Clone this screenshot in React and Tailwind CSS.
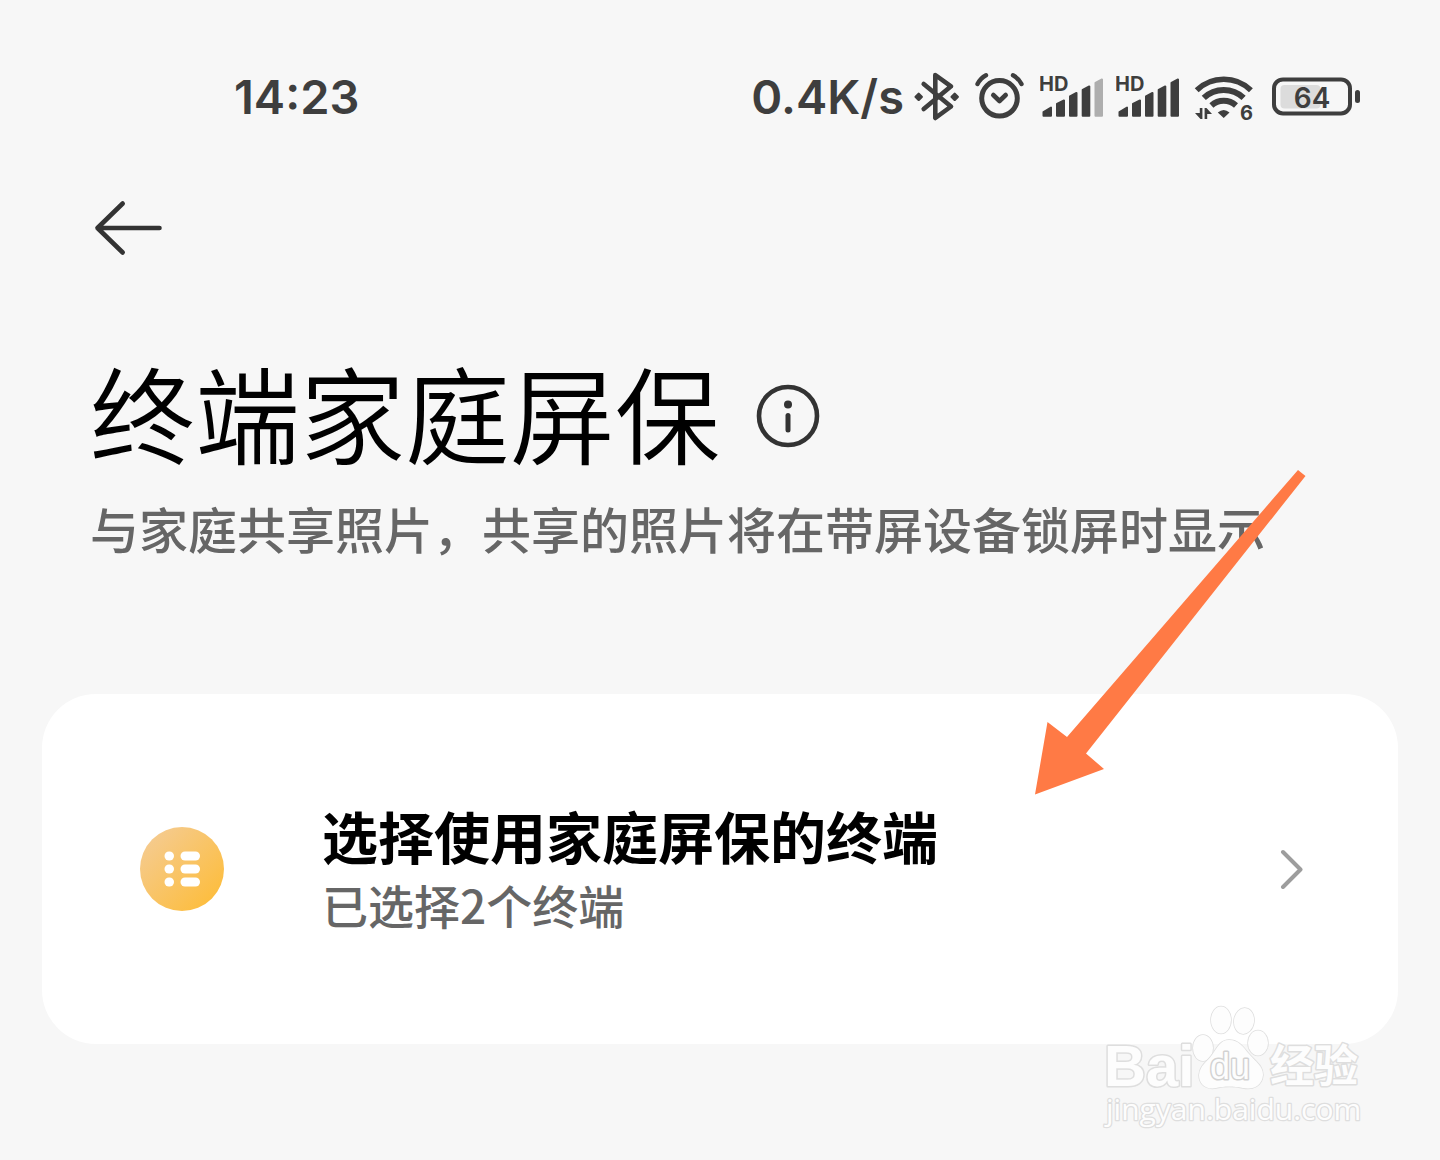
import { useId } from "react";

const StatusText = ({ children }) => (
  <span className="font-['Inter',sans-serif] text-[47px] leading-[58px] font-semibold whitespace-nowrap">{children}</span>
);

const BluetoothIcon = () => (
  <svg width="45" height="50" viewBox="0 0 45 50" className="shrink-0" aria-hidden="true">
    <path
      d="M9.7 12 L37 34.5 L21.3 46 V3 L37 14.3 L9.7 37"
      fill="none"
      stroke="currentColor"
      strokeWidth="4.6"
      strokeLinecap="round"
      strokeLinejoin="round"
    />
    <path
      d="M4.7 21.8 L7.7 24.8 L4.7 27.8 L1.7 24.8 Z M40.7 21.8 L43.7 24.8 L40.7 27.8 L37.7 24.8 Z"
      fill="currentColor"
      stroke="currentColor"
      strokeWidth="2.4"
      strokeLinejoin="round"
    />
  </svg>
);

const AlarmIcon = () => (
  <svg width="49" height="50" viewBox="0 0 49 50" className="shrink-0" fill="none" stroke="currentColor" strokeLinecap="round" strokeLinejoin="round" aria-hidden="true">
    <circle cx="24.5" cy="26.3" r="17.8" strokeWidth="5" />
    <path d="M18.3 23 L24.5 29 L30.7 23" strokeWidth="4.6" />
    <path d="M2.5 12 Q5.5 6 11 3.2 M38 3.2 Q43.5 6 46.5 12" strokeWidth="4.4" />
  </svg>
);

const SignalIcon = ({ weak }) => (
  <svg width="63" height="50" viewBox="0 0 63 50" className="shrink-0" fill="currentColor" aria-hidden="true">
    <text x="-1" y="19" fontSize="20" fontWeight="700" fontFamily="Inter, sans-serif">HD</text>
    <g stroke="currentColor" strokeWidth="2" strokeLinejoin="round">
      <path d="M3.5 40 L11 35.5 V43.7 H3.5 Z" />
      <path d="M17 32 L24 28.5 V43.7 H17 Z" />
      <path d="M30 24.5 L36.5 21 V43.7 H30 Z" />
      <path d="M42.7 18 L49.3 14.5 V43.7 H42.7 Z" />
    </g>
    <path
      d="M55.5 11 L62 7.5 V43.7 H55.5 Z"
      className={weak ? "fill-[#aeaeae] stroke-[#aeaeae]" : "fill-[#3e3e3e] stroke-[#3e3e3e]"}
      strokeWidth="2"
      strokeLinejoin="round"
    />
  </svg>
);

const WifiIcon = () => (
  <svg width="61" height="50" viewBox="0 0 61 50" className="shrink-0 overflow-visible" fill="none" stroke="currentColor" aria-hidden="true">
    <path d="M1.7 18.2 A39 39 0 0 1 55.9 18.2" strokeWidth="5.6" />
    <path d="M8.8 25.9 A29 29 0 0 1 48.6 25.9" strokeWidth="6" />
    <path d="M16.4 33.5 A18.5 18.5 0 0 1 41 33.5" strokeWidth="6" />
    <path d="M22.8 40.5 Q28.7 35.5 34.5 40.5 L28.7 46 Z" fill="currentColor" stroke="none" />
    <path d="M4.8 36 H7.4 V47 H5.5 L0 41 H4.8 Z M9.6 47 V36 H11.5 L17 42 H12.2 V47 Z" fill="currentColor" stroke="none" />
    <text x="45" y="48" fontSize="20" fontWeight="700" fontFamily="Inter, sans-serif" fill="currentColor" stroke="none">6</text>
  </svg>
);

const BatteryIcon = () => (
  <svg width="88" height="50" viewBox="0 0 88 50" className="shrink-0" aria-hidden="true">
    <rect x="2" y="7.4" width="76" height="34" rx="9" fill="none" stroke="currentColor" strokeWidth="4" />
    <rect x="8.5" y="13" width="40" height="23.5" rx="4" fill="#dcdcdc" />
    <rect x="83" y="18" width="5" height="13" rx="2.5" fill="currentColor" />
    <text x="40" y="36" textAnchor="middle" fontSize="28" fontWeight="600" fontFamily="Inter, sans-serif" fill="currentColor">64</text>
  </svg>
);

const StatusBar = () => (
  <div className="flex items-center justify-between pr-20 pl-[234px] text-[#3e3e3e]">
    <StatusText>14:23</StatusText>
    <div className="flex items-center gap-4">
      <div className="flex items-center gap-2.5">
        <StatusText>0.4K/s</StatusText>
        <BluetoothIcon />
      </div>
      <AlarmIcon />
      <div className="flex items-center gap-[13px]">
        <SignalIcon weak />
        <SignalIcon />
      </div>
      <WifiIcon />
      <BatteryIcon />
    </div>
  </div>
);

const ListIcon = () => {
  const id = useId();
  return (
    <svg width="84" height="84" viewBox="0 0 84 84" className="shrink-0" aria-hidden="true">
      <defs>
        <linearGradient id={id} x1="0.1" y1="0.1" x2="0.9" y2="0.9">
          <stop offset="0" stopColor="#f5cb90" />
          <stop offset="1" stopColor="#fdbd3c" />
        </linearGradient>
      </defs>
      <circle cx="42" cy="42" r="42" fill={`url(#${id})`} />
      {[24.5, 37.5, 50.5].map((y) => (
        <g key={y} fill="#fff">
          <rect x="24.5" y={y} width="9.5" height="9" rx="4.5" />
          <rect x="40.5" y={y} width="19.5" height="9" rx="4.5" />
        </g>
      ))}
    </svg>
  );
};

const PointerArrow = () => (
  <svg width="271" height="325" viewBox="0 0 271 325" className="pointer-events-none absolute -top-56 right-[92px]" aria-hidden="true">
    <path d="M263 0 L270.5 6 L51 283.5 L69 299 L0 324.5 L12.5 252 L32 267 Z" fill="#ff7a45" />
  </svg>
);

const Watermark = () => (
  <svg
    width="264"
    height="128"
    viewBox="0 0 264 128"
    className="pointer-events-none absolute top-[308px] right-8"
    fill="#fdfdfd"
    stroke="#dedede"
    strokeWidth="1.5"
    strokeLinejoin="round"
    paintOrder="stroke"
    aria-hidden="true"
  >
    <text x="2" y="84" fontSize="58" fontWeight="700" fontFamily="Liberation Sans, sans-serif" strokeWidth="3">Bai</text>
    <ellipse cx="101" cy="46" rx="10" ry="13" />
    <ellipse cx="119" cy="18" rx="10" ry="13.5" />
    <ellipse cx="142" cy="19" rx="10" ry="13" transform="rotate(8 142 19)" />
    <ellipse cx="156" cy="41" rx="10" ry="12.5" />
    <path d="M127 38 C137 38 141 45 147 52 C154 60 161 64 161 73 C160 84 151 88 141 86 C131 84 123 84 114 86 C104 88 97 82 97 73 C98 63 105 60 110 53 C115 46 118 38 127 38 Z" />
    <text x="108" y="77" fontSize="36" fontFamily="Liberation Sans, sans-serif" strokeWidth="3" stroke="#d2d2d2">du</text>
    <text x="168" y="80" fontSize="44" fontWeight="700" fontFamily="Noto Sans CJK SC, sans-serif" strokeWidth="3">经验</text>
    <text x="4" y="118" fontSize="30" fontFamily="Open Sans, sans-serif" strokeWidth="2.5">jingyan.baidu.com</text>
  </svg>
);

const App = () => {
  return (
    <main className="min-h-screen bg-[#f7f7f7] pt-[68px] font-['Noto_Sans_CJK_SC',sans-serif]" lang="zh-CN">
      <StatusBar />

      <header className="px-[90px] pt-[74px]">
        <button type="button" aria-label="返回" className="block text-[#333333]">
          <svg width="76" height="56" viewBox="0 0 76 56" fill="none" stroke="currentColor" strokeWidth="4.6" strokeLinecap="round" strokeLinejoin="round">
            <path d="M32.7 3.5 L7.5 28 L32.7 52.5 M7.5 28 H69.5" />
          </svg>
        </button>
        <div className="mt-20 flex items-start gap-9">
          <h1 className="text-[105px] leading-[148px] font-[350] whitespace-nowrap text-black">终端家庭屏保</h1>
          <button type="button" aria-label="说明" className="mt-12 text-[#333333]">
            <svg width="64" height="64" viewBox="0 0 64 64" fill="none" stroke="currentColor">
              <circle cx="32" cy="32" r="29" strokeWidth="4.6" />
              <circle cx="32" cy="20.5" r="4" fill="currentColor" stroke="none" />
              <path d="M32 31.5 V46" strokeWidth="5" strokeLinecap="round" />
            </svg>
          </button>
        </div>
        <p className="mt-1.5 text-[49px] leading-[76px] font-medium whitespace-nowrap text-[#666666]">
          与家庭共享照片，共享的照片将在带屏设备锁屏时显示
        </p>
      </header>

      <section className="relative mx-[42px] mt-32">
        <button type="button" className="flex w-full items-center rounded-[54px] bg-white py-[102px] pr-[94px] pl-[98px] text-left">
          <ListIcon />
          <span className="ml-[98px] flex-1 pb-2">
            <span className="block text-[56px] leading-[78px] font-bold text-black">选择使用家庭屏保的终端</span>
            <span className="block text-[46px] leading-[60px] font-medium text-[#666666]">已选择2个终端</span>
          </span>
          <svg width="24" height="40" viewBox="0 0 24 40" fill="none" stroke="#9d9d9d" strokeWidth="4" strokeLinecap="round" strokeLinejoin="round" aria-hidden="true">
            <path d="M3 3 L20.5 20.5 L3 38" />
          </svg>
        </button>
        <PointerArrow />
        <Watermark />
      </section>
    </main>
  );
};

export default App;
